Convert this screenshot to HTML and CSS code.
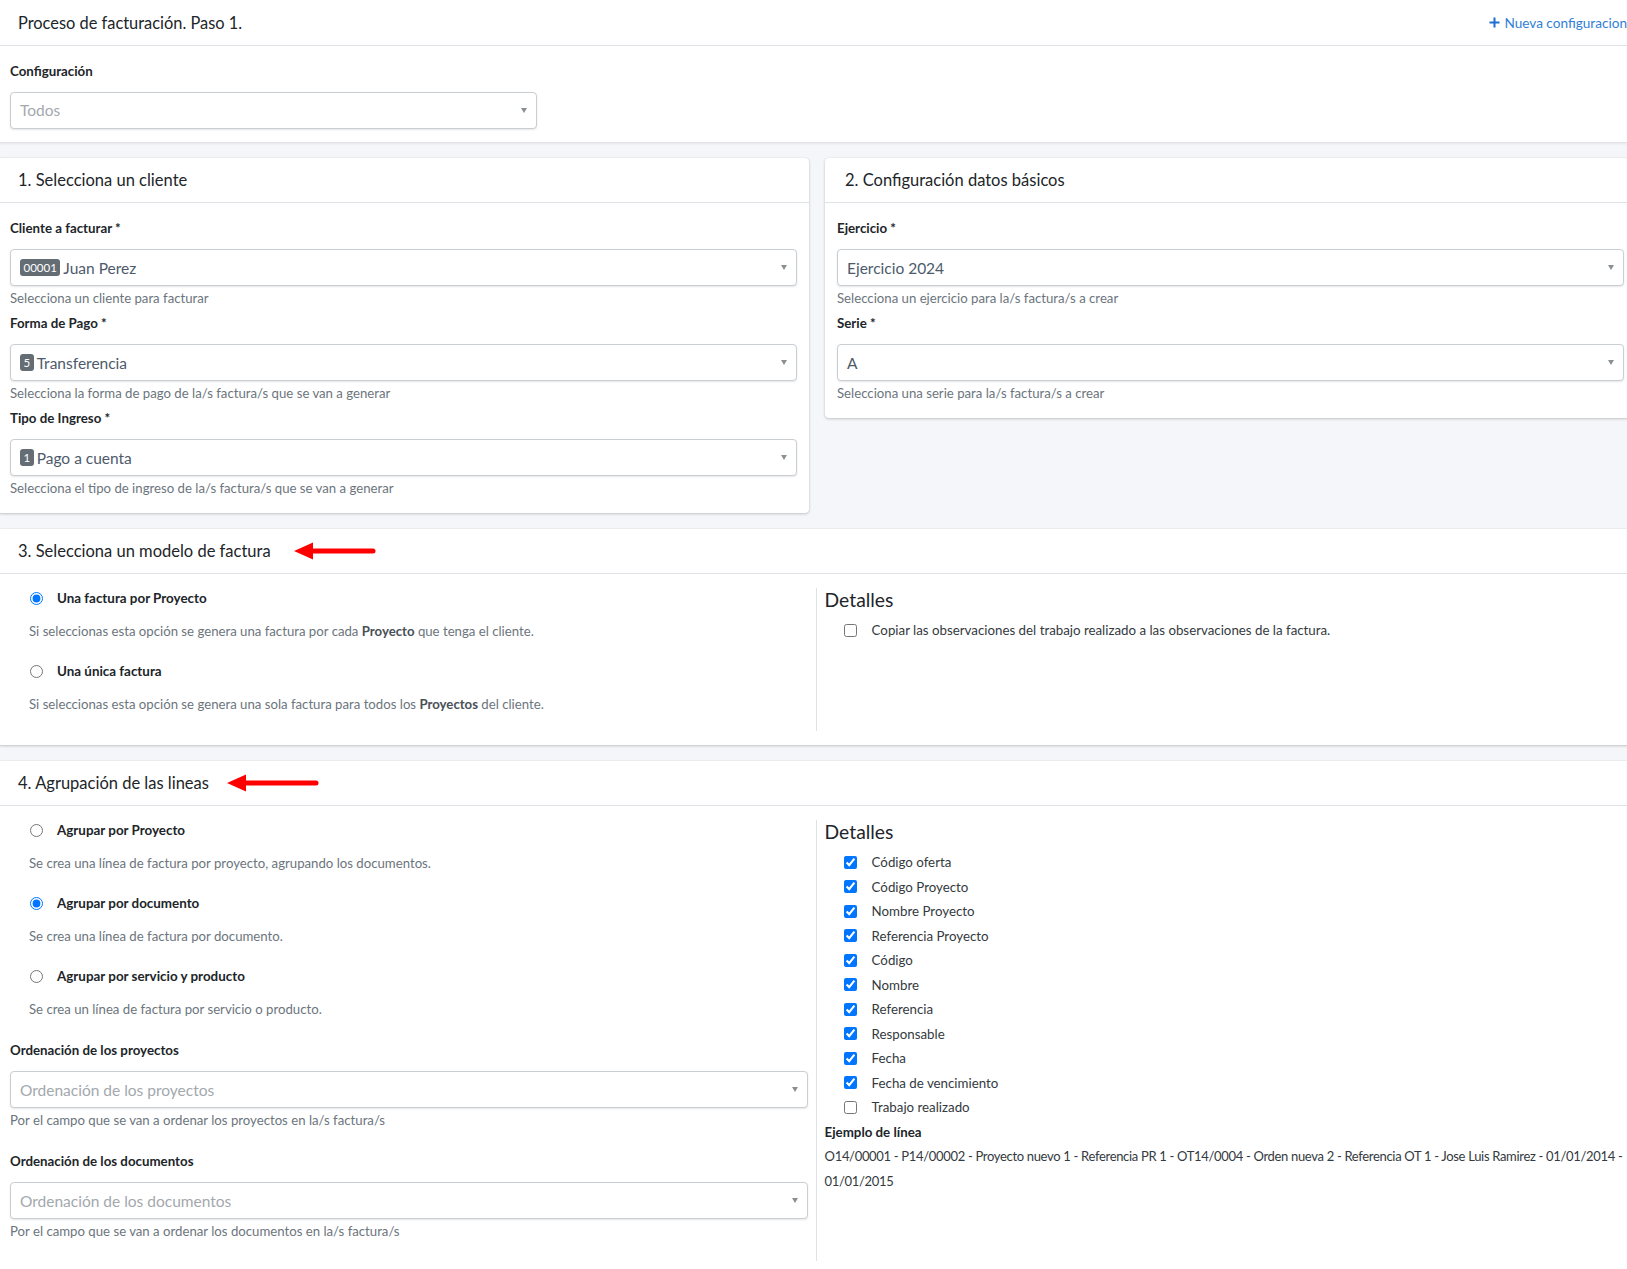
FILE: index.html
```html
<!DOCTYPE html>
<html lang="es">
<head>
<meta charset="utf-8">
<title>Proceso de facturación</title>
<link rel="stylesheet" href="styles.css">
</head>
<body>
<div class="page">
  <section class="panel-top">
    <header class="top-head">
      <h1 class="top-title">Proceso de facturación. Paso 1.</h1>
      <a class="new-link" href="#"><svg class="plus" width="11" height="11" viewBox="0 0 11 11"><path d="M5.5 0.5v10M0.5 5.5h10" stroke="currentColor" stroke-width="2"/></svg>Nueva configuracion</a>
    </header>
    <div class="top-body">
      <label class="field-label">Configuración</label>
      <div class="select select-config is-placeholder"><span>Todos</span><span class="caret"></span></div>
    </div>
  </section>

  <div class="card-row">
    <section class="card">
      <div class="card-head"><h2 class="card-title">1. Selecciona un cliente</h2></div>
      <div class="form-body">
        <div class="field">
          <label class="field-label">Cliente a facturar *</label>
          <div class="select"><span class="badge">00001</span><span>Juan Perez</span><span class="caret"></span></div>
          <div class="help">Selecciona un cliente para facturar</div>
        </div>
        <div class="field">
          <label class="field-label">Forma de Pago *</label>
          <div class="select"><span class="badge">5</span><span>Transferencia</span><span class="caret"></span></div>
          <div class="help">Selecciona la forma de pago de la/s factura/s que se van a generar</div>
        </div>
        <div class="field">
          <label class="field-label">Tipo de Ingreso *</label>
          <div class="select"><span class="badge">1</span><span>Pago a cuenta</span><span class="caret"></span></div>
          <div class="help">Selecciona el tipo de ingreso de la/s factura/s que se van a generar</div>
        </div>
      </div>
    </section>

    <section class="card">
      <div class="card-head"><h2 class="card-title">2. Configuración datos básicos</h2></div>
      <div class="form-body">
        <div class="field">
          <label class="field-label">Ejercicio *</label>
          <div class="select"><span>Ejercicio 2024</span><span class="caret"></span></div>
          <div class="help">Selecciona un ejercicio para la/s factura/s a crear</div>
        </div>
        <div class="field">
          <label class="field-label">Serie *</label>
          <div class="select"><span>A</span><span class="caret"></span></div>
          <div class="help">Selecciona una serie para la/s factura/s a crear</div>
        </div>
      </div>
    </section>
  </div>

  <section class="card card-wide">
    <div class="card-head">
      <h2 class="card-title">3. Selecciona un modelo de factura</h2>
      <svg class="arrow arrow-3" width="82" height="18" viewBox="0 0 82 18"><polygon points="0,9 19,0.5 19,17.5" fill="#ff0000"/><line x1="17" y1="9" x2="79" y2="9" stroke="#ff0000" stroke-width="5" stroke-linecap="round"/></svg>
    </div>
    <div class="split">
      <div class="col-left">
        <div class="opt">
          <label class="opt-row"><input type="radio" name="modelo" checked>Una factura por Proyecto</label>
          <div class="opt-desc">Si seleccionas esta opción se genera una factura por cada <b>Proyecto</b> que tenga el cliente.</div>
        </div>
        <div class="opt">
          <label class="opt-row"><input type="radio" name="modelo">Una única factura</label>
          <div class="opt-desc">Si seleccionas esta opción se genera una sola factura para todos los <b>Proyectos</b> del cliente.</div>
        </div>
      </div>
      <div class="col-right">
        <h3 class="details-title">Detalles</h3>
        <label class="check-row"><input type="checkbox">Copiar las observaciones del trabajo realizado a las observaciones de la factura.</label>
      </div>
    </div>
  </section>

  <section class="card card-wide">
    <div class="card-head">
      <h2 class="card-title">4. Agrupación de las lineas</h2>
      <svg class="arrow arrow-4" width="92" height="18" viewBox="0 0 92 18"><polygon points="0,9 19,0.5 19,17.5" fill="#ff0000"/><line x1="17" y1="9" x2="89" y2="9" stroke="#ff0000" stroke-width="5" stroke-linecap="round"/></svg>
    </div>
    <div class="split">
      <div class="col-left">
        <div class="opt">
          <label class="opt-row"><input type="radio" name="agrupa">Agrupar por Proyecto</label>
          <div class="opt-desc">Se crea una línea de factura por proyecto, agrupando los documentos.</div>
        </div>
        <div class="opt">
          <label class="opt-row"><input type="radio" name="agrupa" checked>Agrupar por documento</label>
          <div class="opt-desc">Se crea una línea de factura por documento.</div>
        </div>
        <div class="opt">
          <label class="opt-row"><input type="radio" name="agrupa">Agrupar por servicio y producto</label>
          <div class="opt-desc">Se crea un línea de factura por servicio o producto.</div>
        </div>
        <div class="field field-wide">
          <label class="field-label">Ordenación de los proyectos</label>
          <div class="select is-placeholder"><span>Ordenación de los proyectos</span><span class="caret"></span></div>
          <div class="help">Por el campo que se van a ordenar los proyectos en la/s factura/s</div>
        </div>
        <div class="field field-wide">
          <label class="field-label">Ordenación de los documentos</label>
          <div class="select is-placeholder"><span>Ordenación de los documentos</span><span class="caret"></span></div>
          <div class="help">Por el campo que se van a ordenar los documentos en la/s factura/s</div>
        </div>
      </div>
      <div class="col-right">
        <h3 class="details-title">Detalles</h3>
        <label class="check-row"><input type="checkbox" checked>Código oferta</label>
        <label class="check-row"><input type="checkbox" checked>Código Proyecto</label>
        <label class="check-row"><input type="checkbox" checked>Nombre Proyecto</label>
        <label class="check-row"><input type="checkbox" checked>Referencia Proyecto</label>
        <label class="check-row"><input type="checkbox" checked>Código</label>
        <label class="check-row"><input type="checkbox" checked>Nombre</label>
        <label class="check-row"><input type="checkbox" checked>Referencia</label>
        <label class="check-row"><input type="checkbox" checked>Responsable</label>
        <label class="check-row"><input type="checkbox" checked>Fecha</label>
        <label class="check-row"><input type="checkbox" checked>Fecha de vencimiento</label>
        <label class="check-row"><input type="checkbox">Trabajo realizado</label>
        <div class="example-title">Ejemplo de línea</div>
        <div class="example">O14/00001 - P14/00002 - Proyecto nuevo 1 - Referencia PR 1 - OT14/0004 - Orden nueva 2 - Referencia OT 1 - Jose Luis Ramirez - 01/01/2014 - 01/01/2015</div>
      </div>
    </div>
  </section>
</div>
</body>
</html>
```

FILE: styles.css
```css
html, body {
  overflow-x: hidden;
}
body {
  margin: 0;
  background: #f4f6f9;
  font-family: Lato, "Liberation Sans", sans-serif;
  color: #212529;
  font-size: 13.2px;
}
.page {
  margin-left: -2px;
  width: 1638px;
}
.panel-top {
  background: #fff;
  box-shadow: 0 1px 3px rgba(0, 0, 0, 0.12);
}
.top-head {
  height: 45px;
  border-bottom: 1px solid #dee2e6;
  display: flex;
  align-items: center;
  justify-content: space-between;
  padding: 0 9px 0 20px;
}
.top-title {
  margin: 0;
  font-size: 16.4px;
  font-weight: 400;
}
.new-link {
  color: #2f80d8;
  font-size: 13.6px;
  text-decoration: none;
  display: flex;
  align-items: center;
  gap: 4px;
}
.plus {
  color: #1d6fd0;
}
.top-body {
  padding: 13.5px 12px;
}
.field-label {
  display: block;
  font-size: 13.3px;
  font-weight: 700;
  line-height: 22px;
  margin-bottom: 10px;
}
.select {
  height: 37px;
  box-sizing: border-box;
  border: 1px solid #c9ced3;
  border-radius: 4px;
  box-shadow: 0 1px 2px rgba(0, 0, 0, 0.1);
  display: flex;
  align-items: center;
  padding: 0 9px;
  font-size: 15.5px;
  color: #4d5a6b;
  background: #fff;
}
.select.is-placeholder {
  color: #a3a8ad;
}
.select-config {
  width: 527px;
}
.caret {
  margin-left: auto;
  width: 0;
  height: 0;
  border-left: 3.5px solid transparent;
  border-right: 3.5px solid transparent;
  border-top: 5px solid #8a8f94;
}
.badge {
  background: #646c74;
  color: #fff;
  font-size: 11.5px;
  border-radius: 3px;
  padding: 0 3.5px;
  height: 17px;
  line-height: 17px;
  margin-right: 3px;
}
.card-row {
  display: flex;
  gap: 16px;
  align-items: flex-start;
  margin-top: 16px;
}
.card {
  flex: 1;
  background: #fff;
  border-radius: 4px;
  box-shadow: 0 0 1px rgba(0, 0, 0, 0.13), 0 1px 3px rgba(0, 0, 0, 0.2);
}
.card-head {
  height: 44px;
  border-bottom: 1px solid #dee2e6;
  display: flex;
  align-items: center;
  padding: 0 20px;
}
.card-title {
  margin: 0;
  font-size: 16.5px;
  font-weight: 400;
}
.arrow {
  flex: none;
}
.arrow-3 {
  margin-left: 23px;
}
.arrow-4 {
  margin-left: 18px;
}
.form-body {
  padding: 14px 12px 11px;
}
.field {
  margin-bottom: 4px;
}
.field.field-wide {
  margin-bottom: 20px;
}
.help {
  margin-top: 2px;
  line-height: 20px;
  color: #6c757d;
}
.card-wide {
  margin-top: 16px;
}
.split {
  display: grid;
  grid-template-columns: 818.6px 1fr;
  padding: 14px 0;
}
.col-left {
  box-sizing: border-box;
  border-right: 1px solid #dee2e6;
  padding: 0 8px 0 12px;
}
.col-right {
  padding: 0 4px 0 8px;
}
.opt {
  margin-bottom: 20px;
}
.opt:last-child {
  margin-bottom: 17px;
}
.opt-row {
  display: flex;
  align-items: center;
  height: 20px;
  padding-left: 19px;
  font-weight: 700;
  font-size: 13.4px;
}
.opt-row input {
  width: 13px;
  height: 13px;
  margin: 0 14.5px 0 0.5px;
}
.opt-desc {
  margin-top: 13px;
  line-height: 20px;
  padding-left: 19px;
  color: #6c757d;
}
.opt-desc b {
  color: #495057;
  font-weight: 700;
}
.details-title {
  margin: 0 0 6px;
  font-size: 19.3px;
  font-weight: 400;
  line-height: 24px;
}
.check-row {
  display: flex;
  align-items: center;
  height: 24.5px;
  padding-left: 19.5px;
  color: #343a40;
  font-size: 13.3px;
}
.check-row input {
  width: 13px;
  height: 13px;
  margin: 0 14.5px 0 0;
}
.example-title {
  font-weight: 700;
  line-height: 24.5px;
  font-size: 13.3px;
}
.example {
  line-height: 24.5px;
  color: #343a40;
  font-size: 13px;
  letter-spacing: -0.32px;
}
```
